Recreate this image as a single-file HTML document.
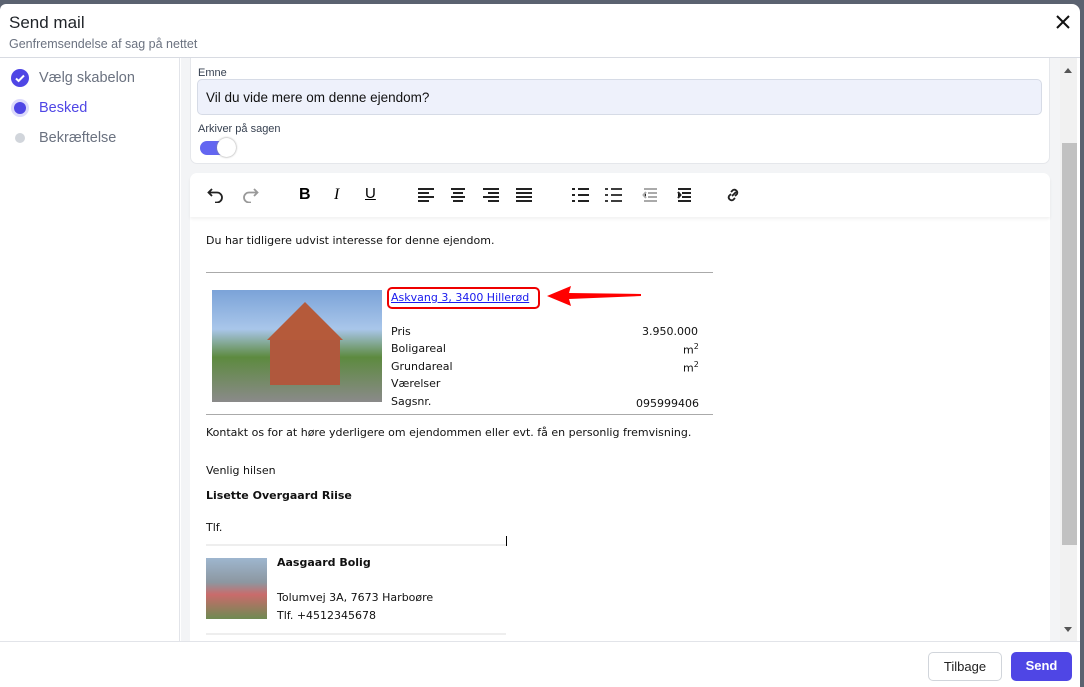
<!DOCTYPE html>
<html><head><meta charset="utf-8"><style>
*{box-sizing:border-box;margin:0;padding:0}
body{width:1084px;height:687px;background:#5b6270;font-family:"Liberation Sans",sans-serif;position:relative;overflow:hidden}
.dlg{position:absolute;left:0;top:4px;width:1080px;height:683px;background:#fff;border-radius:6px 8px 0 0;overflow:hidden}
.hdr{position:absolute;left:0;top:0;width:1080px;height:54px;border-bottom:1px solid #d8dbe2}
.t{position:absolute;left:9px;top:9px;font-size:17px;color:#1f2328}
.st{position:absolute;left:9px;top:33px;font-size:12.5px;color:#6b7280}
.side{position:absolute;left:0;top:54px;width:180px;height:583px;border-right:1px solid #e2e4e9}
.step{position:absolute;left:39px;font-size:14.5px;color:#6b7280}
.main{position:absolute;left:181px;top:54px;width:879px;height:583px;background:#f3f4f6;overflow:hidden}
.card{position:absolute;background:#fff;border:1px solid #e5e7eb;border-radius:7px}
.sb{position:absolute;left:1060px;top:54px;width:17px;height:583px;background:#f1f1f1}
.foot{position:absolute;left:0;top:637px;width:1080px;height:46px;border-top:1px solid #e2e4e9;background:#fff}
.btn{position:absolute;top:10px;height:29px;border-radius:5px;font-size:13px;text-align:center;line-height:27px}
.m{font-family:"DejaVu Sans",sans-serif;font-size:11px;color:#111;position:absolute;white-space:nowrap}
</style></head><body>
<div class="dlg">
<div class="hdr"><div class="t">Send mail</div><div class="st">Genfremsendelse af sag på nettet</div>
<svg width="14" height="14" viewBox="0 0 14 14" style="position:absolute;left:1056px;top:11px"><path d="M1 1L13 13M13 1L1 13" stroke="#111" stroke-width="2"/></svg></div>
<div class="side">
<svg style="position:absolute;left:11px;top:11px" width="18" height="18"><circle cx="9" cy="9" r="9" fill="#4f46e5"/><path d="M5 9.5l2.6 2.5L13 6.5" stroke="#fff" stroke-width="2" fill="none"/></svg>
<div class="step" style="top:12px">Vælg skabelon</div>
<svg style="position:absolute;left:10px;top:40px" width="20" height="20"><circle cx="10" cy="10" r="9" fill="#dcdafb"/><circle cx="10" cy="10" r="6" fill="#4f46e5"/></svg>
<div class="step" style="top:42px;color:#4f46e5">Besked</div>
<svg style="position:absolute;left:14px;top:74px" width="12" height="12"><circle cx="6" cy="6" r="5" fill="#d1d5db"/></svg>
<div class="step" style="top:72px">Bekræftelse</div>
</div>
<div class="main">
<div class="card" style="left:9px;top:-10px;width:860px;height:116px">
<div style="position:absolute;left:7px;top:18px;font-size:11px;color:#374151">Emne</div>
<div style="position:absolute;left:6px;top:30px;width:845px;height:36px;background:#eef1fb;border:1px solid #d6dbe6;border-radius:5px;font-size:13.5px;color:#111;padding:10px 8px">Vil du vide mere om denne ejendom?</div>
<div style="position:absolute;left:7px;top:74px;font-size:11px;color:#374151">Arkiver på sagen</div>
<div style="position:absolute;left:9px;top:92px;width:27px;height:14px;border-radius:7px;background:#6366f1"></div>
<div style="position:absolute;left:26px;top:89px;width:19px;height:19px;border-radius:50%;background:#fff;box-shadow:0 0 2px #888"></div>
</div>
<div class="card" style="left:9px;top:115px;width:860px;height:480px;border:none">
<div style="position:absolute;left:0;top:0;width:860px;height:44px;box-shadow:0 2px 3px rgba(0,0,0,.06);border-radius:7px 7px 0 0">
<svg style="position:absolute;left:17px;top:14px" width="18" height="16" viewBox="0 0 18 16"><path d="M5 2L1.5 5.5 5 9M2 5.5h8a5 5 0 010 10H8" stroke="#222" stroke-width="1.8" fill="none"/></svg>
<svg style="position:absolute;left:51px;top:14px" width="18" height="16" viewBox="0 0 18 16"><path d="M13 2l3.5 3.5L13 9M16 5.5H8a5 5 0 000 10h2" stroke="#999" stroke-width="1.8" fill="none"/></svg>
<div style="position:absolute;left:109px;top:13px;font-weight:bold;font-size:16px">B</div>
<div style="position:absolute;left:144px;top:13px;font-style:italic;font-size:16px;font-family:'Liberation Serif',serif">I</div>
<div style="position:absolute;left:175px;top:12px;font-size:15px;text-decoration:underline">U</div>
<svg style="position:absolute;left:228px;top:15px" width="122" height="14"><g stroke="#222" stroke-width="2"><path d="M0 1h16M0 5h11M0 9h16M0 13h11"/><path d="M33 1h14M35 5h10M33 9h14M35 13h10"/><path d="M65 1h16M70 5h11M65 9h16M70 13h11"/><path d="M98 1h16M98 5h16M98 9h16M98 13h16"/></g></svg>
<svg style="position:absolute;left:382px;top:15px" width="120" height="14"><g stroke="#222" stroke-width="2"><path d="M0 1h3M6 1h11M0 7h3M6 7h11M0 13h3M6 13h11"/><path d="M39 1h11M39 7h11M39 13h11M33 1h3M33 7h3M33 13h3" stroke-width="1.8"/><path d="M72 1h13M76 5h9M76 9h9M72 13h13M74 4l-2.5 3 2.5 3" stroke="#aaa"/><path d="M106 1h13M110 5h9M110 9h9M106 13h13M106 4l2.5 3-2.5 3"/></g></svg>
<svg style="position:absolute;left:534px;top:13px" width="18" height="18" viewBox="0 0 18 18"><path d="M8 10l4-4M7 6l2-2a3 3 0 014 4l-2 2M11 12l-2 2a3 3 0 01-4-4l2-2" stroke="#222" stroke-width="1.8" fill="none"/></svg>
</div>
<div class="m" style="left:16px;top:61px">Du har tidligere udvist interesse for denne ejendom.</div>
<div style="position:absolute;left:16px;top:99px;width:507px;border-top:1px solid #aaa"></div>
<div style="position:absolute;left:22px;top:117px;width:170px;height:112px;background:linear-gradient(#7ba3d8 0%,#a9c6ea 35%,#5d8a3f 60%,#8a8a8a 100%)">
<div style="position:absolute;left:55px;top:12px;width:0;height:0;border-left:38px solid transparent;border-right:38px solid transparent;border-bottom:38px solid #b55a3a"></div>
<div style="position:absolute;left:58px;top:50px;width:70px;height:45px;background:#b0583d"></div></div>
<div style="position:absolute;left:197px;top:114px;width:153px;height:22px;border:2px solid #e00;border-radius:5px"></div>
<div class="m" style="left:201px;top:118px;color:#1a1aee;text-decoration:underline">Askvang 3, 3400 Hillerød</div>
<svg style="position:absolute;left:357px;top:110px" width="96" height="26"><path d="M0 13L24 3 22 10 94 11 94 13 22 16 24 23z" fill="#f00"/></svg>
<div class="m" style="left:201px;top:152px">Pris</div><div class="m" style="left:452px;top:152px">3.950.000</div>
<div class="m" style="left:201px;top:169px">Boligareal</div><div class="m" style="left:493px;top:169px">m<sup style="font-size:8px">2</sup></div>
<div class="m" style="left:201px;top:187px">Grundareal</div><div class="m" style="left:493px;top:187px">m<sup style="font-size:8px">2</sup></div>
<div class="m" style="left:201px;top:204px">Værelser</div>
<div class="m" style="left:201px;top:222px">Sagsnr.</div><div class="m" style="left:446px;top:224px">095999406</div>
<div style="position:absolute;left:16px;top:241px;width:507px;border-top:1px solid #aaa"></div>
<div class="m" style="left:16px;top:253px">Kontakt os for at høre yderligere om ejendommen eller evt. få en personlig fremvisning.</div>
<div class="m" style="left:16px;top:291px">Venlig hilsen</div>
<div class="m" style="left:16px;top:316px;font-weight:bold">Lisette Overgaard Riise</div>
<div class="m" style="left:16px;top:348px">Tlf.</div>
<div style="position:absolute;left:16px;top:371px;width:300px;border-top:2px solid #eee"></div>
<div style="position:absolute;left:316px;top:363px;width:1px;height:10px;background:#000"></div>
<div style="position:absolute;left:16px;top:385px;width:61px;height:61px;background:linear-gradient(#9eb6cf 0%,#8c97a0 40%,#c96b6b 60%,#6e8a52 100%)"></div>
<div class="m" style="left:87px;top:383px;font-weight:bold">Aasgaard Bolig</div>
<div class="m" style="left:87px;top:418px">Tolumvej 3A, 7673 Harboøre</div>
<div class="m" style="left:87px;top:436px">Tlf. +4512345678</div>
<div style="position:absolute;left:16px;top:460px;width:300px;border-top:2px solid #eee"></div>
</div>
</div>
<div class="sb"><div style="position:absolute;left:2px;top:85px;width:15px;height:402px;background:#c1c1c1"></div>
<div style="position:absolute;left:4px;top:10px;border-left:4px solid transparent;border-right:4px solid transparent;border-bottom:5px solid #555"></div>
<div style="position:absolute;left:4px;top:569px;border-left:4px solid transparent;border-right:4px solid transparent;border-top:5px solid #555"></div></div>
<div class="foot">
<div class="btn" style="left:928px;width:74px;border:1px solid #d1d5db;color:#222;background:#fff">Tilbage</div>
<div class="btn" style="left:1011px;width:61px;background:#4f46e5;color:#fff;font-weight:bold">Send</div>
</div>
</div>
</body></html>
